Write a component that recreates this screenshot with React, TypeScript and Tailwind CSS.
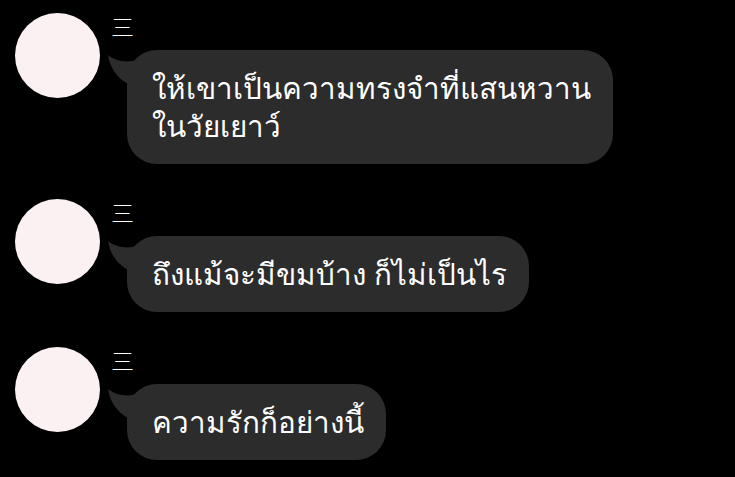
import React from "react";

type Message = { name: string; lines: string[] };

const messages: Message[] = [
  { name: "三", lines: ["ให้เขาเป็นความทรงจำที่แสนหวาน", "ในวัยเยาว์"] },
  { name: "三", lines: ["ถึงแม้จะมีขมบ้าง ก็ไม่เป็นไร"] },
  { name: "三", lines: ["ความรักก็อย่างนี้"] },
];

const Tail = () => (
  <svg
    className="absolute left-[-20px] top-[4px]"
    width="34"
    height="32"
    viewBox="0 0 34 32"
  >
    <path
      d="M1 1 C3 14 10 24 21 30 L30 6 C20 9 8 7 1 1 Z"
      fill="#2c2c2c"
    />
  </svg>
);

const ChatRow = ({ message }: { message: Message }) => (
  <div className="flex items-start">
    <div className="w-[85px] h-[85px] shrink-0 rounded-full bg-[#fbf1f2]" />
    <div className="flex flex-col ml-[11px]">
      <span className="text-[23px] leading-[28px] font-light text-white">{message.name}</span>
      <div className="relative ml-[16px] mt-[9px] self-start rounded-[30px] bg-[#2c2c2c] pl-[25px] pr-[22px] py-[19px]">
        <Tail />
        {message.lines.map((line) => (
          <p key={line} className="text-[29.6px] leading-[38px] font-light text-white whitespace-nowrap">
            {line}
          </p>
        ))}
      </div>
    </div>
  </div>
);

export default function App() {
  return (
    <div
      className="w-[735px] h-[477px] overflow-hidden bg-black pl-[15px] pt-[13px] flex flex-col gap-[35px]"
      style={{ fontFamily: '"Noto Sans", "Noto Sans CJK SC", sans-serif' }}
    >
      {messages.map((m, i) => (
        <ChatRow key={i} message={m} />
      ))}
    </div>
  );
}
